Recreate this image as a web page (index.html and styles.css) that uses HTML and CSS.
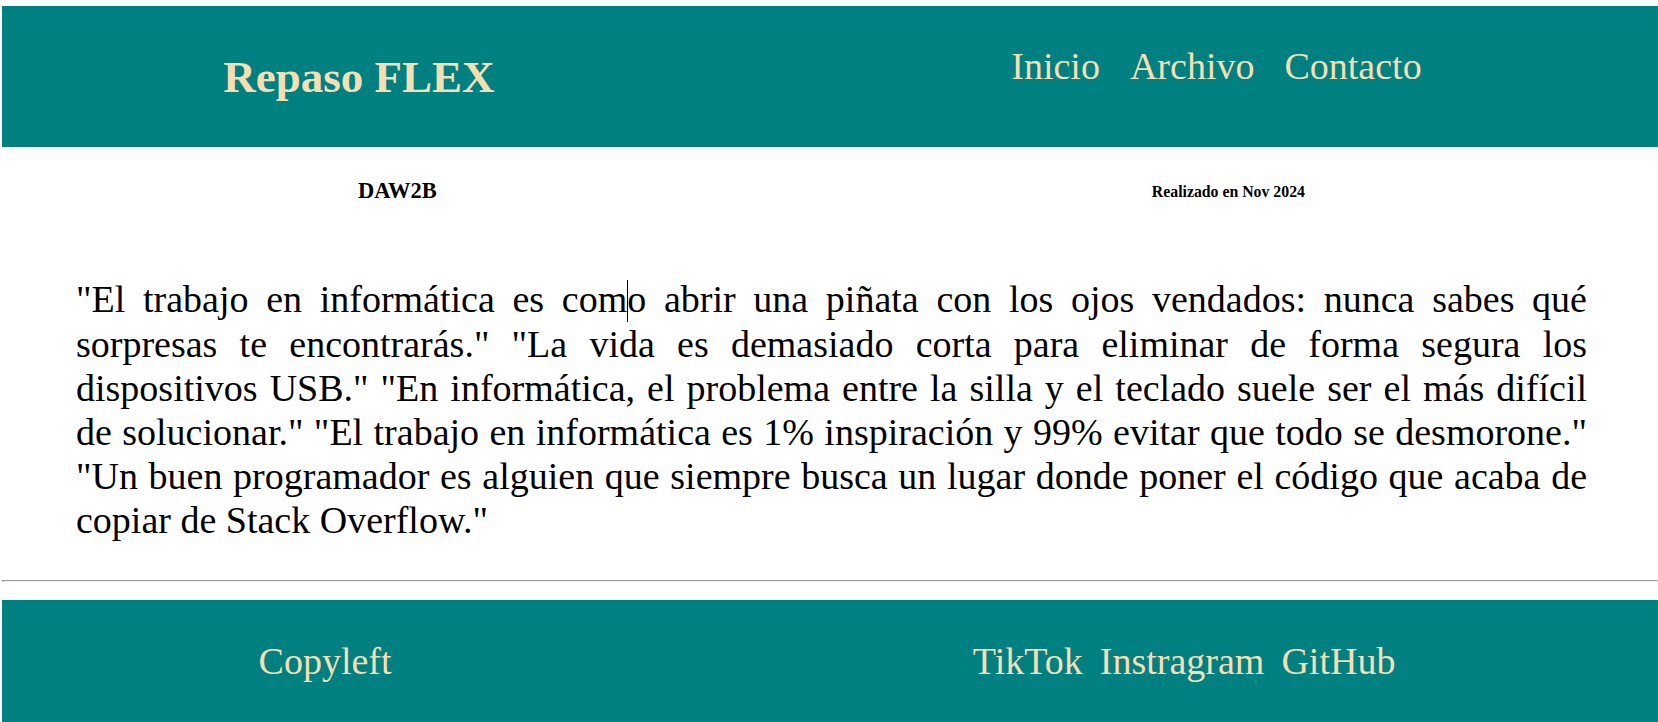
FILE: index.html
```html
<!DOCTYPE html>
<html lang="es">
<head>
<meta charset="utf-8">
<title>Repaso FLEX</title>
<link rel="stylesheet" href="styles.css">
</head>
<body>
<header class="top">
  <h1 class="title">Repaso FLEX</h1>
  <nav>
    <ul class="menu">
      <li><a href="#">Inicio</a></li>
      <li><a href="#">Archivo</a></li>
      <li><a href="#">Contacto</a></li>
    </ul>
  </nav>
</header>
<section class="info">
  <h3 class="group">DAW2B</h3>
  <h6 class="date">Realizado en Nov 2024</h6>
</section>
<p class="quotes">"El trabajo en informática es com<span class="caret"></span>o abrir una piñata con los ojos vendados: nunca sabes qué sorpresas te encontrarás." "La vida es demasiado corta para eliminar de forma segura los dispositivos USB." "En informática, el problema entre la silla y el teclado suele ser el más difícil de solucionar." "El trabajo en informática es 1% inspiración y 99% evitar que todo se desmorone." "Un buen programador es alguien que siempre busca un lugar donde poner el código que acaba de copiar de Stack Overflow."</p>
<hr class="divider">
<footer class="bottom">
  <span class="copy">Copyleft</span>
  <ul class="social">
    <li><a href="#">TikTok</a></li>
    <li><a href="#">Instragram</a></li>
    <li><a href="#">GitHub</a></li>
  </ul>
</footer>
</body>
</html>
```

FILE: styles.css
```css
html, body {
  overflow: hidden;
}

body {
  margin: 6px 0 0 2px;
  font-family: "Liberation Serif", "Times New Roman", serif;
  color: #000;
  background: #fff;
}

.top {
  height: 141px;
  background: #008080;
  display: flex;
  justify-content: space-around;
  align-items: center;
}

.title {
  margin: 0;
  font-size: 45px;
  font-weight: bold;
  color: #f5deb3;
}

.menu {
  list-style: none;
  display: flex;
  gap: 30px;
  margin: 0 0 22px 0;
  padding: 0 15px 0 74px;
}

.menu a,
.social a,
.copy {
  color: #f5deb3;
  text-decoration: none;
}

.menu a {
  font-size: 38px;
}

.info {
  height: 88px;
  display: flex;
  justify-content: space-around;
  align-items: center;
}

.group {
  margin: 0;
  font-size: 22.5px;
  font-weight: bold;
}

.date {
  margin: 2px -3px 0 3px;
  font-size: 15.8px;
  font-weight: bold;
}

.quotes {
  margin: 42px 0 0 0;
  padding: 0 71px 0 74px;
  font-size: 38px;
  text-align: justify;
}

.caret {
  display: inline-block;
  width: 0;
  height: 42px;
  margin-right: -1px;
  border-left: 1px solid #000;
  vertical-align: -10px;
}

.divider {
  margin: 38px 0 18px 0;
}

.bottom {
  height: 122px;
  background: #008080;
  display: flex;
  justify-content: space-around;
  align-items: center;
}

.copy {
  font-size: 38px;
}

.social {
  list-style: none;
  display: flex;
  gap: 17px;
  margin: 0;
  padding: 0 6px 0 68px;
}

.social a {
  font-size: 38px;
}
```
